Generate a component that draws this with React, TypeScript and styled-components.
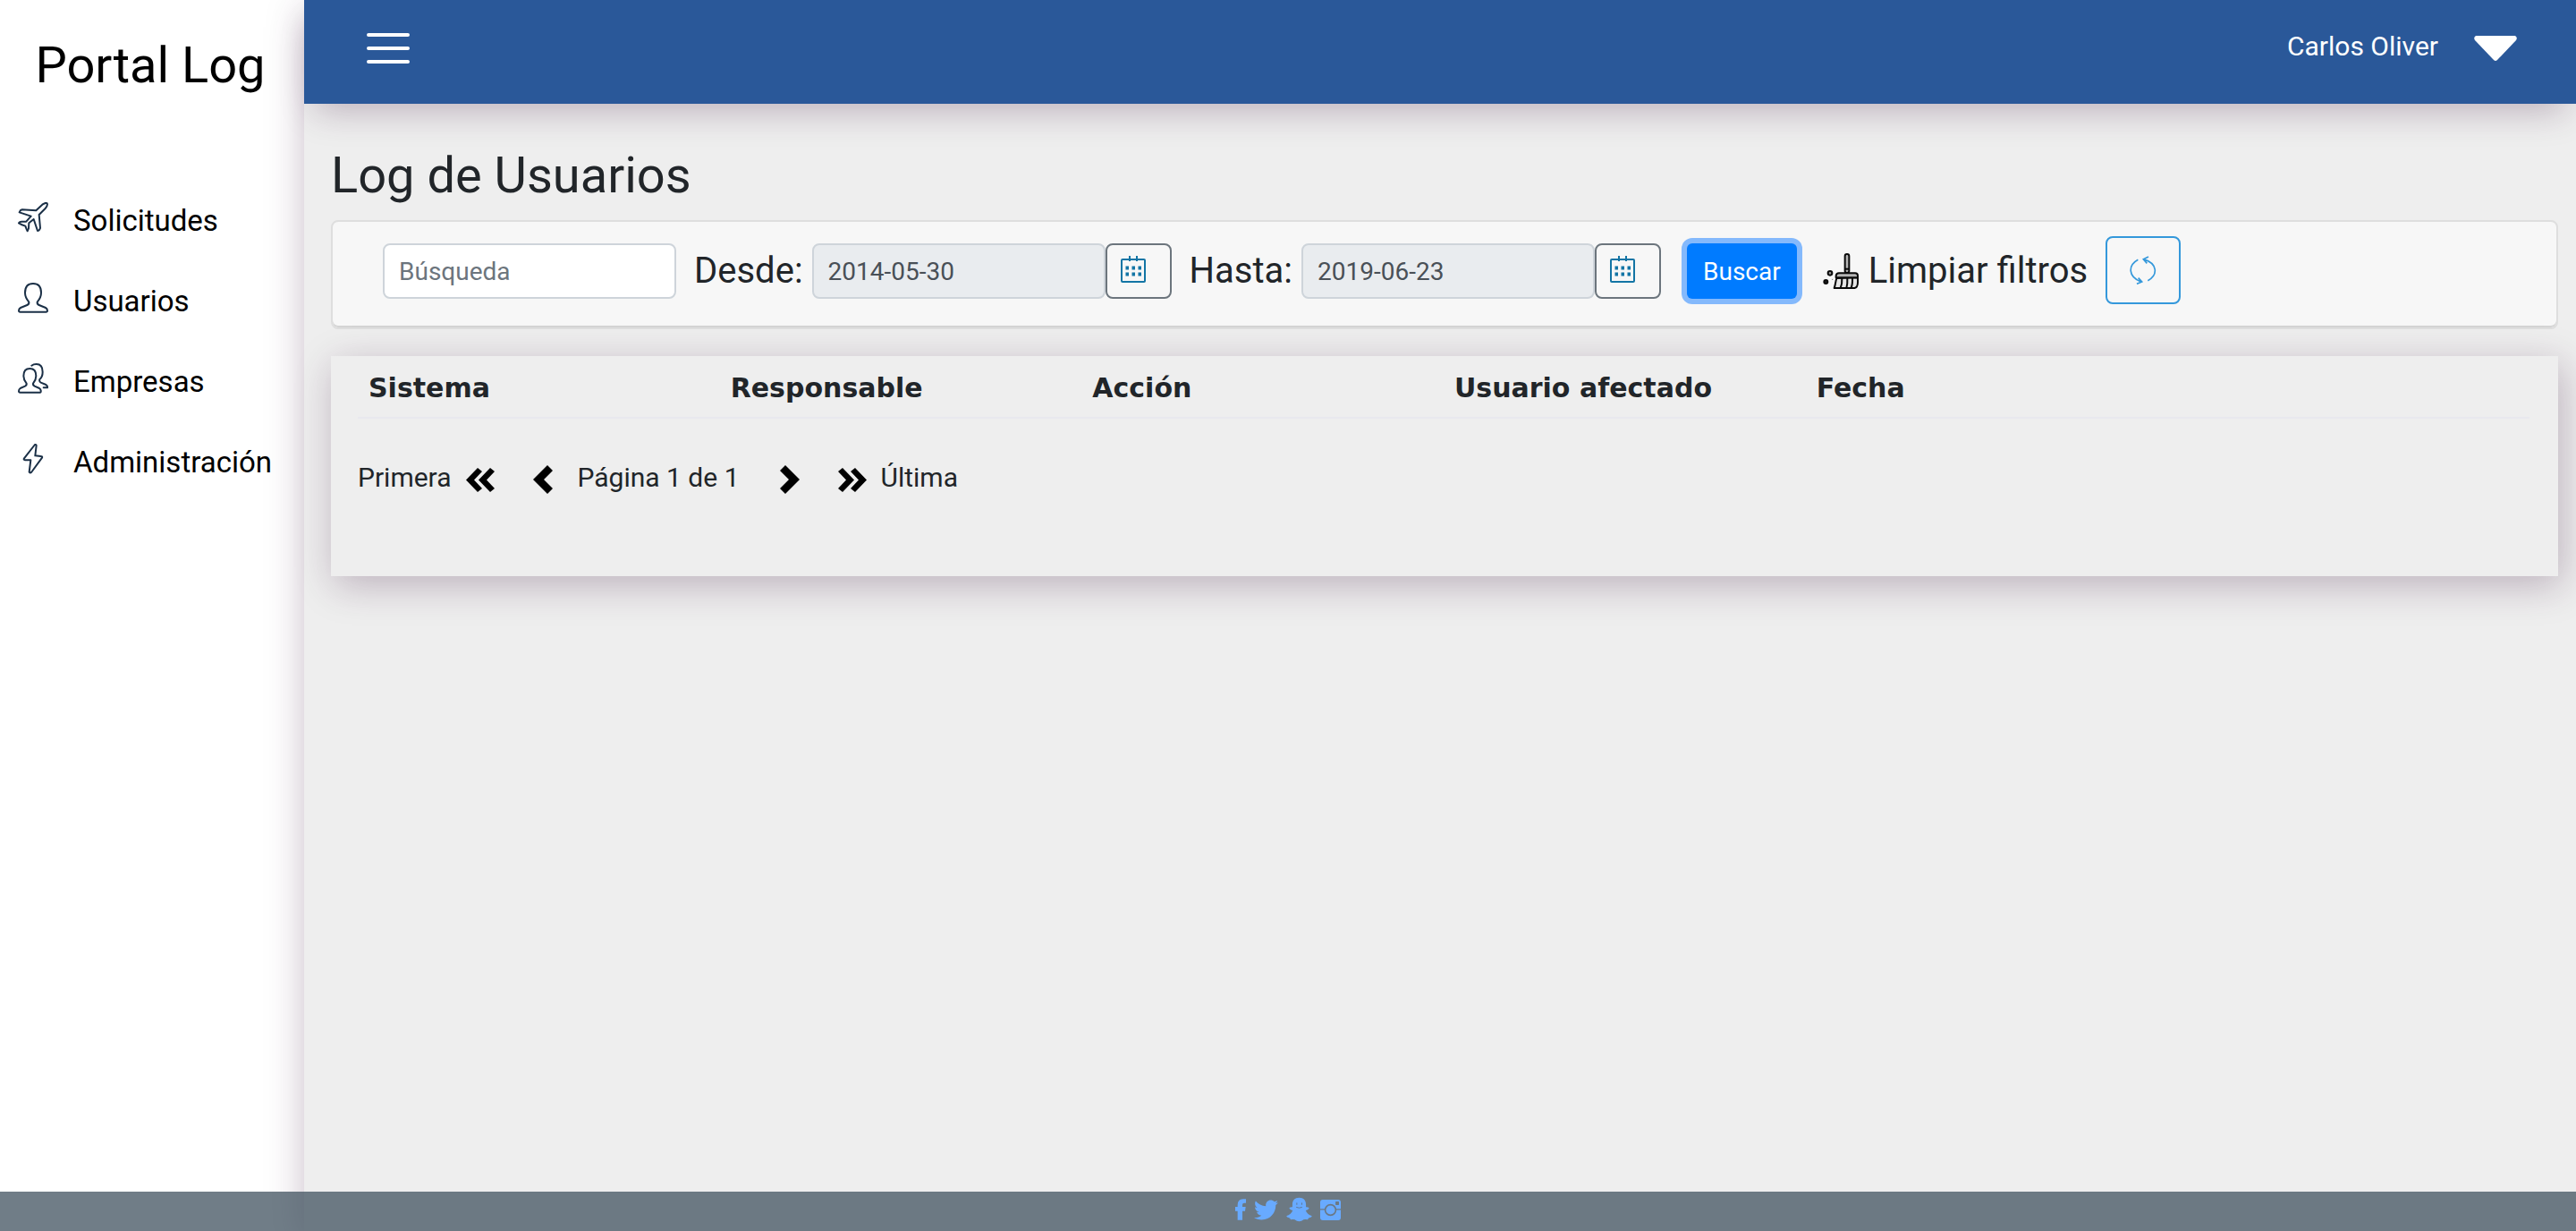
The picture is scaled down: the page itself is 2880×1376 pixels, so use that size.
import React, { useState } from "react";
import styled, { createGlobalStyle, css } from "styled-components";
import { FaTwitter } from "react-icons/fa";

const GlobalStyle = createGlobalStyle`
  *, *::before, *::after { box-sizing: border-box; }
  body {
    margin: 0;
    background: #eeeeee;
    color: #212529;
    font-family: Roboto, "Noto Sans", sans-serif;
    font-size: 28px;
  }
  button, input { font-family: inherit; }
`;

const Shell = styled.div`
  display: grid;
  grid-template-columns: 340px minmax(0, 1fr);
  min-height: 100vh;
`;

const Sidebar = styled.aside`
  background: #ffffff;
  color: #000000;
`;

const Brand = styled.div`
  padding: 39px 4px 0 0;
  font-size: 56px;
  line-height: 68px;
  text-align: center;
`;

const Menu = styled.ul`
  list-style: none;
  margin: 94px 0 0;
  padding: 0;
`;

const MenuLink = styled.a`
  display: flex;
  align-items: center;
  gap: 28px;
  height: 90px;
  padding-left: 20px;
  color: inherit;
  font-size: 33px;
  text-decoration: none;
  white-space: nowrap;
`;

const MenuIcon = styled.svg`
  flex: none;
  width: 34px;
  height: 34px;
  margin-bottom: 6px;
  fill: none;
  stroke: #1b3047;
  stroke-width: 6;
  stroke-linejoin: round;
  stroke-linecap: round;
`;

const Content = styled.div`
  position: relative;
  background: #eeeeee;
  box-shadow: 0 10px 40px rgba(60, 20, 60, 0.28);
`;

const TopBar = styled.header`
  position: relative;
  display: flex;
  align-items: center;
  justify-content: space-between;
  height: 116px;
  padding: 0 66px 8px 70px;
  background: #2a5899;
  box-shadow: 0 20px 38px -12px rgba(60, 20, 60, 0.28);
`;

const PlainButton = styled.button`
  display: flex;
  align-items: center;
  padding: 0;
  border: 0;
  background: none;
  color: inherit;
  font-size: 30px;
  line-height: 36px;
  cursor: pointer;
`;

const UserButton = styled(PlainButton)`
  gap: 40px;
  color: #ffffff;
`;

const UserName = styled.span`
  padding-bottom: 4px;
`;

const Page = styled.main`
  padding: 46px 20px 100px 30px;
`;

const Heading = styled.h1`
  margin: 0 0 16px;
  font-size: 56px;
  font-weight: 400;
  line-height: 68px;
`;

const Filters = styled.form`
  display: flex;
  flex-wrap: wrap;
  align-items: center;
  gap: 20px;
  padding: 16px 56px 24px;
  border: 2px solid #dedede;
  border-radius: 8px;
  background: #f7f7f7;
  box-shadow: inset 0 -2px 0 #d4d4d4;
`;

const Field = styled.div`
  display: flex;
  align-items: center;
`;

const FieldLabel = styled.label`
  margin-right: 10px;
  font-size: 40px;
  line-height: 48px;
`;

const TextBox = styled.input`
  width: 328px;
  height: 62px;
  padding: 0 16px;
  border: 2px solid #ced4da;
  border-radius: 8px;
  background: #ffffff;
  color: #495057;
  font-size: 28px;
  &::placeholder { color: #6c757d; opacity: 1; }
  &:read-only { background: #e9ecef; }
`;

const CalendarButton = styled.button`
  display: flex;
  align-items: center;
  width: 74px;
  height: 62px;
  padding: 0 0 4px 14px;
  border: 2px solid #6c757d;
  border-radius: 8px;
  background: transparent;
  cursor: pointer;
`;

const SearchButton = styled.button`
  height: 62px;
  margin: 0 9px;
  padding: 0 18px;
  border: 0;
  border-radius: 6px;
  background: #007bff;
  box-shadow: 0 0 0 6px #84b9fc;
  color: #ffffff;
  font-size: 28px;
  cursor: pointer;
`;

const ClearButton = styled(PlainButton)`
  gap: 11px;
  font-size: 40px;
  line-height: 48px;
`;

const RefreshButton = styled.button`
  display: flex;
  align-items: center;
  justify-content: center;
  width: 84px;
  height: 76px;
  margin-bottom: 2px;
  padding: 0;
  border: 2px solid #3498db;
  border-radius: 8px;
  background: transparent;
  cursor: pointer;
`;

const Panel = styled.section`
  margin-top: 30px;
  padding: 0 32px 92px 30px;
  background: #eeeeee;
  box-shadow: 4px 10px 40px rgba(60, 20, 60, 0.28);
`;

const LogTable = styled.table`
  width: 100%;
  table-layout: fixed;
  border-collapse: collapse;
  border-bottom: 2px solid #e8e8ee;
`;

const HeadCell = styled.th`
  padding: 18px 12px 14px;
  font-family: "DejaVu Sans", sans-serif;
  font-size: 30px;
  font-weight: 700;
  line-height: 36px;
  text-align: left;
`;

const Pager = styled.nav`
  display: flex;
  align-items: center;
  margin-top: 48px;
  font-size: 30px;
  line-height: 36px;
`;

const PagerButton = styled(PlainButton)<{ $edge?: "start" | "end" }>`
  gap: 16px;
  ${(p) => p.$edge === "start" && css`margin-right: 43px;`}
  ${(p) => p.$edge === "end" && css`margin-left: 43px;`}
`;

const PageCount = styled.span`
  padding: 0 45px 0 28px;
`;

const Footer = styled.footer`
  position: fixed;
  inset: auto 0 0 0;
  display: flex;
  align-items: center;
  justify-content: center;
  gap: 9px;
  height: 44px;
  padding-bottom: 4px;
  background: rgba(64, 81, 95, 0.75);
`;

const SocialLink = styled.a`
  display: flex;
  color: #68aaff;
`;

const PlaneIcon = () => (
  <MenuIcon viewBox="0 0 102 102" aria-hidden="true">
    <path d="M61 28 82 8Q93 0 98 4Q101 11 92 21L71 42L75 87Q72 96 66 96L53 57L37 70L36 88L32 97Q28 89 25 80Q13 76 3 70Q6 65 12 65L28 65L44 47L5 34Q8 26 14 25Z" />
  </MenuIcon>
);

const UserIcon = () => (
  <MenuIcon viewBox="0 0 102 102" aria-hidden="true">
    <path d="M51 3C32 3 24 15 24 34C24 50 32 59 37 65C38 71 36 73 31 75L9 84Q3 87 3 94Q3 98 8 98H94Q99 98 99 94Q99 87 93 84L71 75C66 73 64 71 65 65C70 59 78 50 78 34C78 15 70 3 51 3Z" />
  </MenuIcon>
);

const UsersIcon = () => (
  <MenuIcon viewBox="0 0 102 102" aria-hidden="true">
    <path d="M40 18C25 18 19 28 19 43C19 56 25 63 29 68C30 74 28 75 24 77L8 84Q3 87 3 94Q3 98 8 98H74Q78 98 77 93Q77 87 72 84L56 77C52 75 50 74 51 68C55 63 61 56 61 43C61 28 55 18 40 18Z" />
    <path d="M46 8Q52 3 62 3C77 3 83 13 83 29C83 41 79 49 73 54C71 60 72 62 77 65L94 72Q100 76 99 82H86" />
  </MenuIcon>
);

const BoltIcon = () => (
  <MenuIcon viewBox="0 0 102 102" aria-hidden="true">
    <path d="M57 3 21 49Q18 54 24 55L43 55L38 95Q41 99 45 96L81 47Q83 42 77 42L58 40L62 6Q61 2 57 3Z" />
  </MenuIcon>
);

const CalendarIcon = () => (
  <svg width="30" height="30" viewBox="0 0 30 30" fill="none" stroke="#1375a5" strokeWidth="2" aria-hidden="true">
    <rect x="2" y="4" width="26" height="25" rx="1" />
    <path d="M11 0V6M19 0V6" />
    <path d="M6.500 13.500H10M13.500 13.500H17M20.500 13.500H24M6.500 20.500H10M13.500 20.500H17M20.500 20.500H24" strokeWidth="4" />
  </svg>
);

const BroomIcon = () => (
  <svg width="40" height="40" viewBox="0 0 120 120" stroke="#0a0a0a" strokeWidth="6" strokeLinejoin="round" aria-hidden="true">
    <rect x="74" y="3" width="14" height="63" rx="7" fill="#b5b5b5" />
    <path d="M74 53H88" />
    <path d="M46 84C42 96 42 108 38 117H106Q117 114 117 98V82Z" fill="#e6e6e6" />
    <path d="M64 84Q65 104 59 117M82 84Q83 104 79 117M99 84Q100 104 95 115" fill="none" />
    <path d="M44 82V76Q45 67 54 67H108Q117 67 117 76V82Z" fill="#b5b5b5" />
    <circle cx="24" cy="67" r="7" fill="#999999" />
    <circle cx="10" cy="96" r="6" fill="#222222" />
    <circle cx="32" cy="88" r="2" stroke="none" fill="#777777" />
  </svg>
);

const RefreshIcon = () => (
  <svg width="30" height="32" viewBox="0 0 90 96" fill="none" stroke="#3498db" strokeWidth="5" aria-hidden="true">
    <path d="M28 13C-6 32-6 70 38 87M29 74 41 87 24 94" />
    <path d="M61 83C95 64 95 26 46 11M58 25 46 11 63 3" />
  </svg>
);

const DoubleChevron = ({ flip = false }: { flip?: boolean }) => (
  <svg width="32" height="36" viewBox="0 0 32 36" aria-hidden="true">
    <g transform={flip ? "matrix(-1 0 0 1 32 0)" : undefined}>
      <path d="M13 7 18 11 9 20.500 18 30 13 34 0 20.500Z" />
      <path d="M27 7 32 11 23 20.500 32 30 27 34 14 20.500Z" />
    </g>
  </svg>
);

const Chevron = ({ flip = false }: { flip?: boolean }) => (
  <svg width="22" height="36" viewBox="0 0 22 36" aria-hidden="true">
    <path transform={flip ? "matrix(-1 0 0 1 22 0)" : undefined} d="M16 4 22 10 12 20 22 30 16 36 0 20Z" />
  </svg>
);

const FacebookIcon = () => (
  <svg width="12" height="24" viewBox="0 0 36 70" aria-hidden="true">
    <path fill="currentColor" d="M8 70V40H0V26H8V20Q8 0 26 0H36V13H30Q24 13 24 20V26H35L33 40H24V70Z" />
  </svg>
);

const SnapchatIcon = () => (
  <svg width="29" height="28" viewBox="0 0 88 82" aria-hidden="true">
    <path
      fill="currentColor"
      d="M44 1C29 1 21 10 21 24V33Q16 32 11 35Q9 39 22 44C18 54 10 60 2 62Q-2 66 10 69Q14 70 15 75Q23 74 29 75Q36 81 44 81Q52 81 59 75Q65 74 73 75Q74 70 78 69Q90 66 86 62C78 60 70 54 66 44Q79 39 77 35Q72 32 67 33V24C67 10 59 1 44 1Z"
    />
    <path d="M36 18V25M53 18V25M34 33Q44 38 54 33" fill="none" stroke="#5f7897" strokeWidth="3" />
  </svg>
);

const InstagramIcon = () => (
  <svg width="23" height="23" viewBox="0 0 70 70" aria-hidden="true">
    <rect width="70" height="70" rx="9" fill="currentColor" />
    <path d="M0 33H16M54 33H70" stroke="#6b7883" strokeWidth="4" />
    <circle cx="35" cy="35" r="18" fill="none" stroke="#6b7883" strokeWidth="5" />
    <rect x="52" y="6" width="12" height="12" rx="2" fill="#6b7883" />
  </svg>
);

const menu = [
  { label: "Solicitudes", Icon: PlaneIcon },
  { label: "Usuarios", Icon: UserIcon },
  { label: "Empresas", Icon: UsersIcon },
  { label: "Administración", Icon: BoltIcon },
];

const columns = ["Sistema", "Responsable", "Acción", "Usuario afectado", "Fecha", ""];

const DateField = ({ id, label, value }: { id: string; label: string; value: string }) => (
  <Field>
    <FieldLabel htmlFor={id}>{label}</FieldLabel>
    <TextBox id={id} value={value} readOnly />
    <CalendarButton type="button" aria-label={`Elegir fecha ${label}`}>
      <CalendarIcon />
    </CalendarButton>
  </Field>
);

export default function App() {
  const [query, setQuery] = useState("");

  return (
    <>
      <GlobalStyle />
      <Shell>
        <Sidebar>
          <Brand>Portal Log</Brand>
          <nav>
            <Menu>
              {menu.map(({ label, Icon }) => (
                <li key={label}>
                  <MenuLink href="#">
                    <Icon />
                    {label}
                  </MenuLink>
                </li>
              ))}
            </Menu>
          </nav>
        </Sidebar>
        <Content>
          <TopBar>
            <PlainButton type="button" aria-label="Menú">
              <svg width="48" height="36" viewBox="0 0 48 36" stroke="#ffffff" strokeWidth="4" strokeLinecap="round" aria-hidden="true">
                <path d="M2 3H46M2 18H46M2 33H46" />
              </svg>
            </PlainButton>
            <UserButton type="button">
              <UserName>Carlos Oliver</UserName>
              <svg width="48" height="28" viewBox="0 0 48 28" fill="#ffffff" aria-hidden="true">
                <path d="M2 0H46Q49 2 47 5L26 27Q24 29 22 27L1 5Q-1 2 2 0Z" />
              </svg>
            </UserButton>
          </TopBar>
          <Page>
            <Heading>Log de Usuarios</Heading>
            <Filters onSubmit={(e) => e.preventDefault()}>
              <TextBox
                aria-label="Búsqueda"
                placeholder="Búsqueda"
                value={query}
                onChange={(e) => setQuery(e.target.value)}
              />
              <DateField id="desde" label="Desde:" value="2014-05-30" />
              <DateField id="hasta" label="Hasta:" value="2019-06-23" />
              <SearchButton type="submit">Buscar</SearchButton>
              <ClearButton type="button" onClick={() => setQuery("")}>
                <BroomIcon />
                Limpiar filtros
              </ClearButton>
              <RefreshButton type="button" aria-label="Actualizar">
                <RefreshIcon />
              </RefreshButton>
            </Filters>
            <Panel>
              <LogTable>
                <thead>
                  <tr>
                    {columns.map((name, i) => (
                      <HeadCell key={i} scope="col">{name}</HeadCell>
                    ))}
                  </tr>
                </thead>
              </LogTable>
              <Pager aria-label="Paginación">
                <PagerButton type="button" $edge="start">
                  Primera
                  <DoubleChevron />
                </PagerButton>
                <PagerButton type="button" aria-label="Anterior">
                  <Chevron />
                </PagerButton>
                <PageCount>Página 1 de 1</PageCount>
                <PagerButton type="button" aria-label="Siguiente">
                  <Chevron flip />
                </PagerButton>
                <PagerButton type="button" $edge="end">
                  <DoubleChevron flip />
                  Última
                </PagerButton>
              </Pager>
            </Panel>
          </Page>
        </Content>
      </Shell>
      <Footer>
        <SocialLink href="#" aria-label="Facebook"><FacebookIcon /></SocialLink>
        <SocialLink href="#" aria-label="Twitter"><FaTwitter size={27} /></SocialLink>
        <SocialLink href="#" aria-label="Snapchat"><SnapchatIcon /></SocialLink>
        <SocialLink href="#" aria-label="Instagram"><InstagramIcon /></SocialLink>
      </Footer>
    </>
  );
}
